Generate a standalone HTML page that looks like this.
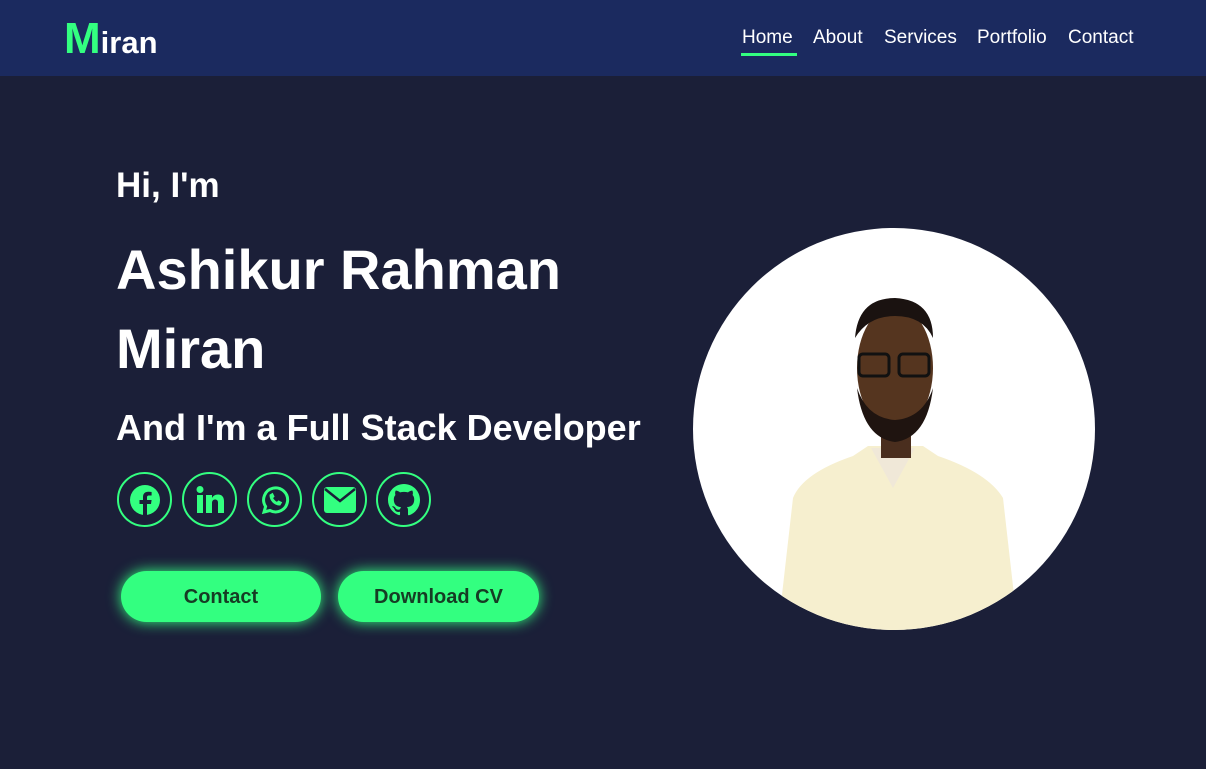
<!DOCTYPE html>
<html><head><meta charset="utf-8"><style>
*{margin:0;padding:0;box-sizing:border-box}
body{width:1206px;height:769px;background:#1b1f38;font-family:"Liberation Sans",sans-serif;overflow:hidden;position:relative;color:#fff}
.nav{position:absolute;left:0;top:0;width:1206px;height:76px;background:#1b2a5f}
.logo{position:absolute;left:64px;top:14px;font-weight:bold;font-size:31px;color:#fff}
.logo b{color:#33ff80;font-size:44px}
.links{position:absolute;top:27px;font-size:19px}
.links span{position:absolute;white-space:nowrap}
.ul{position:absolute;left:741px;top:53px;width:56px;height:3px;background:#33ff80}
.t{position:absolute;left:116px;font-weight:bold;white-space:nowrap}
.ic{position:absolute;top:472px;width:55px;height:55px;border:2px solid #33ff80;border-radius:50%;display:flex;align-items:center;justify-content:center}
.btn{position:absolute;top:571px;height:51px;border-radius:26px;background:#33ff80;color:#163c24;font-size:20px;font-weight:bold;display:flex;align-items:center;justify-content:center;box-shadow:0 0 14px #33ff80;padding-top:2px}
.pic{position:absolute;left:693px;top:228px;width:402px;height:402px;border-radius:50%;background:#fff;overflow:hidden}
</style></head><body>
<div class="nav">
<div class="logo"><b>M</b>iran</div>
<div class="links"><span style="left:742px">Home</span><span style="left:813px">About</span><span style="left:884px">Services</span><span style="left:977px">Portfolio</span><span style="left:1068px">Contact</span></div>
<div class="ul"></div>
</div>
<div class="t" style="top:166px;font-size:35px">Hi, I'm</div>
<div class="t" style="top:237px;font-size:56px">Ashikur Rahman</div>
<div class="t" style="top:316px;font-size:56px">Miran</div>
<div class="t" style="top:407px;font-size:36px">And I'm a Full Stack Developer</div>

<div class="ic" style="left:117px"><svg width="32" height="32" viewBox="0 0 32 32"><circle cx="16" cy="16" r="15" fill="#33ff80"/><path d="M18 32V20h4l.6-4H18v-2.5c0-1.2.4-2 2-2h2.6V8c-.5-.1-1.9-.2-3.4-.2-3.2 0-5.2 1.9-5.2 5.3V16h-3.5v4H14v12z" fill="#1b1f38"/></svg></div>
<div class="ic" style="left:182px"><svg width="30" height="30" viewBox="0 0 30 30" fill="#33ff80"><rect x="2" y="10" width="6" height="18"/><circle cx="5" cy="4.5" r="3.5"/><path d="M11 10h6v3c1-2 3-3.5 6-3.5 4 0 6 2.5 6 7V28h-6V18c0-2.5-1-3.5-3-3.5s-3 1.5-3 3.5v10h-6z"/></svg></div>
<div class="ic" style="left:247px"><svg width="32" height="32" viewBox="0 0 32 32" fill="none" stroke="#33ff80" stroke-width="3"><path d="M5 28l1.6-5.5A12 12 0 1 1 11 26.5z"/><path d="M11 11c0 5 4 10 10 10l1.5-2.5-3-1.5-1.5 1.5c-2-1-3.5-2.5-4.5-4.5l1.5-1.5-1.5-3z" fill="#33ff80" stroke-width="1"/></svg></div>
<div class="ic" style="left:312px"><svg width="34" height="28" viewBox="0 0 34 28"><rect x="1" y="1" width="32" height="26" rx="3" fill="#33ff80"/><path d="M2 3l15 12 15-12" stroke="#1b1f38" stroke-width="2.5" fill="none"/></svg></div>
<div class="ic" style="left:376px"><svg width="32" height="32" viewBox="0 0 16 16" fill="#33ff80"><path d="M8 0C3.58 0 0 3.580 0 8c0 3.54 2.29 6.53 5.47 7.59.4.07.55-.17.55-.38v-1.33c-2.230.48-2.7-1.07-2.7-1.070-.36-.92-.89-1.17-.89-1.17-.73-.5.05-.49.05-.49.8.06 1.23.83 1.23.83.72 1.23 1.88.87 2.34.67.07-.52.28-.87.5-1.07-1.78-.2-3.64-.89-3.64-3.95 0-.87.31-1.59.82-2.15-.08-.2-.36-1.02.08-2.12 0 0 .67-.21 2.2.82a7.6 7.6 0 0 1 4 0c1.53-1.04 2.2-.82 2.2-.82.44 1.1.16 1.92.08 2.12.51.56.82 1.27.82 2.15 0 3.07-1.87 3.75-3.650 3.95.29.25.54.73.54 1.48v2.2c0 .21.15.46.55.38A8 8 0 0 0 16 8c0-4.42-3.58-8-8-8z"/></svg></div>

<div class="btn" style="left:121px;width:200px">Contact</div>
<div class="btn" style="left:338px;width:201px">Download CV</div>

<div class="pic"><svg width="402" height="402" viewBox="0 0 402 402">
<path d="M85 402 L100 270 Q110 245 160 228 L175 218 L230 218 L245 228 Q295 245 310 270 L325 402Z" fill="#f6efcf"/>
<path d="M178 220 L200 260 L222 220Z" fill="#f0e8d8"/>
<rect x="188" y="150" width="30" height="80" fill="#4a2e1e"/>
<ellipse cx="202" cy="140" rx="38" ry="62" fill="#55351f"/>
<path d="M164 160 Q170 210 202 214 Q234 210 240 160 Q230 190 202 192 Q174 190 164 160Z" fill="#1f1410"/>
<path d="M162 110 Q165 70 202 70 Q240 72 240 110 Q230 88 202 88 Q175 88 162 110Z" fill="#1a1210"/>
<rect x="166" y="126" width="30" height="22" rx="4" fill="none" stroke="#111" stroke-width="3"/>
<rect x="206" y="126" width="30" height="22" rx="4" fill="none" stroke="#111" stroke-width="3"/>
</svg></div>
</body></html>
